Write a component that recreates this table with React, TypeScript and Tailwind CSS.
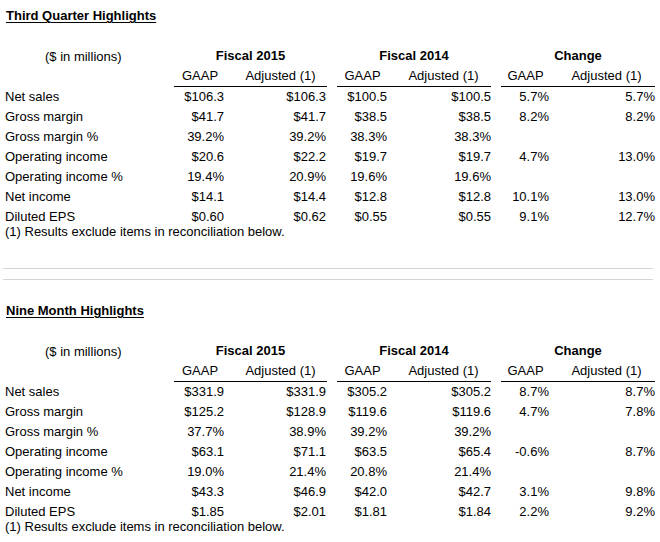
import React from "react";

type Row = { label: string; v: (string | null)[] };

const q3: Row[] = [
  { label: "Net sales", v: ["$106.3", "$106.3", "$100.5", "$100.5", "5.7%", "5.7%"] },
  { label: "Gross margin", v: ["$41.7", "$41.7", "$38.5", "$38.5", "8.2%", "8.2%"] },
  { label: "Gross margin %", v: ["39.2%", "39.2%", "38.3%", "38.3%", null, null] },
  { label: "Operating income", v: ["$20.6", "$22.2", "$19.7", "$19.7", "4.7%", "13.0%"] },
  { label: "Operating income %", v: ["19.4%", "20.9%", "19.6%", "19.6%", null, null] },
  { label: "Net income", v: ["$14.1", "$14.4", "$12.8", "$12.8", "10.1%", "13.0%"] },
  { label: "Diluted EPS", v: ["$0.60", "$0.62", "$0.55", "$0.55", "9.1%", "12.7%"] },
];

const nine: Row[] = [
  { label: "Net sales", v: ["$331.9", "$331.9", "$305.2", "$305.2", "8.7%", "8.7%"] },
  { label: "Gross margin", v: ["$125.2", "$128.9", "$119.6", "$119.6", "4.7%", "7.8%"] },
  { label: "Gross margin %", v: ["37.7%", "38.9%", "39.2%", "39.2%", null, null] },
  { label: "Operating income", v: ["$63.1", "$71.1", "$63.5", "$65.4", "-0.6%", "8.7%"] },
  { label: "Operating income %", v: ["19.0%", "21.4%", "20.8%", "21.4%", null, null] },
  { label: "Net income", v: ["$43.3", "$46.9", "$42.0", "$42.7", "3.1%", "9.8%"] },
  { label: "Diluted EPS", v: ["$1.85", "$2.01", "$1.81", "$1.84", "2.2%", "9.2%"] },
];

const grid = "grid grid-cols-[174px_52px_101px_10px_51px_103px_10px_49px_105px]";

function Section({ title, rows }: { title: string; rows: Row[] }) {
  return (
    <div className="h-[295px]">
      <div className="pt-[8px] pl-[6px] leading-[16px] font-bold underline underline-offset-[2px]">
        {title}
      </div>
      {/* group header row */}
      <div className={`${grid} mt-[23px] h-[19px] leading-[17px]`}>
        <div className="pl-[45px] pt-[1px]">($ in millions)</div>
        <div className="col-span-2 text-center font-bold">Fiscal 2015</div>
        <div />
        <div className="col-span-2 text-center font-bold">Fiscal 2014</div>
        <div />
        <div className="col-span-2 text-center font-bold">Change</div>
      </div>
      {/* sub header row */}
      <div className={`${grid} h-[21px] leading-[20px]`}>
        <div />
        <div className="border-b border-black text-center">GAAP</div>
        <div className="border-b border-black text-center pl-[8px]">Adjusted (1)</div>
        <div />
        <div className="border-b border-black text-center">GAAP</div>
        <div className="border-b border-black text-center pl-[8px]">Adjusted (1)</div>
        <div />
        <div className="border-b border-black text-center">GAAP</div>
        <div className="border-b border-black text-center pl-[8px]">Adjusted (1)</div>
      </div>
      {rows.map((r) => (
        <div key={r.label} className={`${grid} h-[20px] leading-[20px]`}>
          <div className="pl-[5px]">{r.label}</div>
          <div className="text-right pr-[2px]">{r.v[0]}</div>
          <div className="text-right pr-[1px]">{r.v[1]}</div>
          <div />
          <div className="text-right pr-[1px]">{r.v[2]}</div>
          <div className="text-right">{r.v[3]}</div>
          <div />
          <div className="text-right pr-[1px]">{r.v[4]}</div>
          <div className="text-right">{r.v[5]}</div>
        </div>
      ))}
      <div className="-mt-[2px] pl-[5px] leading-[14px]">
        (1) Results exclude items in reconciliation below.
      </div>
    </div>
  );
}

export default function App() {
  return (
    <div
      className="w-[660px] h-[542px] bg-white text-black text-[13px] overflow-hidden"
      style={{ fontFamily: '"Liberation Sans", Arial, sans-serif' }}
    >
      <div className="h-[268px]">
        <Section title="Third Quarter Highlights" rows={q3} />
      </div>
      <div className="ml-[3px] w-[650px] h-[1px] bg-[#d2d6d2]" />
      <div className="h-[10px]" />
      <div className="ml-[3px] w-[650px] h-[1px] bg-[#d2d6d2]" />
      <div className="h-[15px]" />
      <Section title="Nine Month Highlights" rows={nine} />
    </div>
  );
}
